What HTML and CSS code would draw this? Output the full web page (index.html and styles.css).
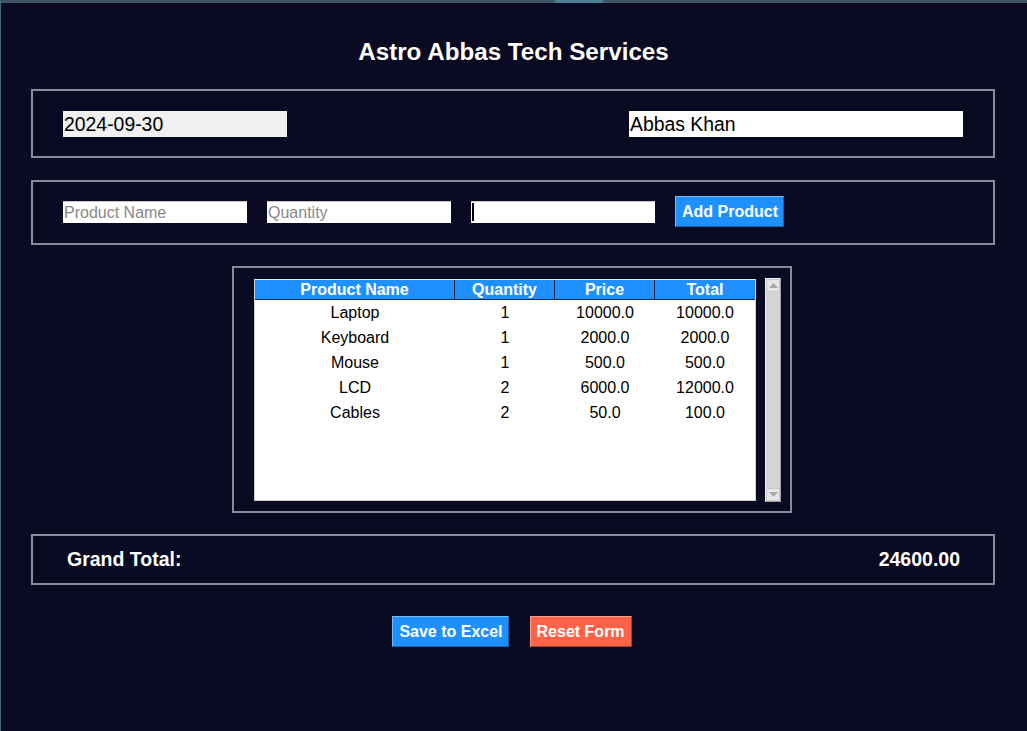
FILE: index.html
```html
<!DOCTYPE html>
<html lang="en">
<head>
<meta charset="utf-8">
<title>Astro Abbas Tech Services</title>
<link rel="stylesheet" href="styles.css">
</head>
<body>
<div class="window">
  <div class="topbar"><span class="topbar-seg"></span></div>
  <h1 class="title">Astro Abbas Tech Services</h1>

  <section class="frame frame-info">
    <div class="entry entry-date">2024-09-30</div>
    <div class="entry entry-name">Abbas Khan</div>
  </section>

  <section class="frame frame-add">
    <div class="entry entry-small placeholder">Product Name</div>
    <div class="entry entry-small placeholder">Quantity</div>
    <div class="entry entry-small"><span class="caret"></span></div>
    <button class="btn btn-blue">Add Product</button>
  </section>

  <section class="frame frame-table">
    <div class="tree">
      <div class="tree-head">
        <div class="th">Product Name</div>
        <div class="th">Quantity</div>
        <div class="th">Price</div>
        <div class="th">Total</div>
      </div>
      <div class="tree-body">
        <div class="tr"><div>Laptop</div><div>1</div><div>10000.0</div><div>10000.0</div></div>
        <div class="tr"><div>Keyboard</div><div>1</div><div>2000.0</div><div>2000.0</div></div>
        <div class="tr"><div>Mouse</div><div>1</div><div>500.0</div><div>500.0</div></div>
        <div class="tr"><div>LCD</div><div>2</div><div>6000.0</div><div>12000.0</div></div>
        <div class="tr"><div>Cables</div><div>2</div><div>50.0</div><div>100.0</div></div>
      </div>
    </div>
    <div class="scrollbar">
      <div class="sb-btn"><svg width="9" height="5" viewBox="0 0 9 5"><path d="M0 5 L4.5 0 L9 5 Z" fill="#a8a8a8"/></svg></div>
      <div class="sb-track"></div>
      <div class="sb-btn"><svg width="9" height="5" viewBox="0 0 9 5"><path d="M0 0 L4.5 5 L9 0 Z" fill="#a8a8a8"/></svg></div>
    </div>
  </section>

  <section class="frame frame-total">
    <span class="total-label">Grand Total:</span>
    <span class="total-value">24600.00</span>
  </section>

  <div class="actions">
    <button class="btn btn-blue btn-save">Save to Excel</button>
    <button class="btn btn-red">Reset Form</button>
  </div>
</div>
</body>
</html>
```

FILE: styles.css
```css
* { box-sizing: border-box; }

html, body {
  margin: 0;
  padding: 0;
  background: #0a0a23;
}

body {
  font-family: "Liberation Sans", Arial, sans-serif;
  color: #ffffff;
}

.window {
  width: 1027px;
  height: 731px;
  display: flex;
  flex-direction: column;
  background: #0a0a23;
  border-left: 1px solid #3d6a80;
  overflow: hidden;
}

.topbar {
  height: 3px;
  background: #3f5862;
  position: relative;
  margin-left: -1px;
}

.topbar-seg {
  position: absolute;
  left: 555px;
  top: 0;
  width: 48px;
  height: 3px;
  background: #4f7f95;
}

.title {
  margin: 35px 0 23px 0;
  height: 28px;
  line-height: 28px;
  font-size: 24.2px;
  font-weight: bold;
  text-align: center;
  padding-right: 1px;
}

.frame {
  margin-left: 30px;
  width: 964px;
  border: 2px solid #8a8a9c;
  display: flex;
  align-items: center;
}

.frame-info {
  padding: 20px 30px 19px 30px;
  justify-content: space-between;
}

.entry {
  background: #ffffff;
  color: #000000;
  font-size: 19.4px;
  line-height: 26px;
  height: 26px;
  padding-left: 1px;
  white-space: nowrap;
}

.entry-date {
  width: 224px;
  background: #f0f0f0;
}

.entry-name {
  width: 334px;
}

.frame-add {
  margin-top: 22px;
  padding: 14px 30px 16px 30px;
  gap: 20px;
}

.entry-small {
  width: 184px;
  height: 22px;
  line-height: 22px;
  font-size: 16px;
  position: relative;
  border-top: 1px solid #c8c8c8;
}

.placeholder {
  color: #888888;
}

.caret {
  position: absolute;
  left: 1px;
  top: 1px;
  width: 2px;
  height: 18px;
  background: #000000;
}

.btn {
  font-family: "Liberation Sans", Arial, sans-serif;
  font-size: 16px;
  font-weight: bold;
  color: #ffffff;
  height: 31px;
  padding: 0 6px;
  border: 1px solid;
  line-height: 29px;
  cursor: pointer;
}

.btn-blue {
  background: #1e90ff;
  border-color: #7ab8f0 #1a5fa8 #1a5fa8 #7ab8f0;
}

.btn-red {
  background: #ff6347;
  border-color: #f5a090 #a84030 #a84030 #f5a090;
}

.btn-save {
  padding: 0 5px 0 6px;
}

.frame-add .btn {
  padding: 0 5px 0 6px;
}

.frame-table {
  margin-top: 21px;
  margin-left: 231px;
  width: 560px;
  padding: 10px 9px 9px 20px;
  align-items: flex-start;
  gap: 9px;
}

.tree {
  width: 502px;
  height: 222px;
  margin-top: 1px;
  background: #ffffff;
  border: 1px solid #d0d0d0;
  border-top-color: #e8e8e8;
}

.tree-head {
  display: grid;
  grid-template-columns: 200px 100px 100px 100px;
  height: 20px;
  background: #1e90ff;
  border-bottom: 1px solid #1a2240;
}

.th {
  font-size: 16px;
  font-weight: bold;
  color: #ffffff;
  text-align: center;
  line-height: 19px;
  border-right: 1px solid #1a2240;
}

.th:last-child {
  border-right: none;
}

.tree-body {
  color: #000000;
  font-size: 16px;
}

.tr {
  display: grid;
  grid-template-columns: 200px 100px 100px 100px;
  height: 25px;
  line-height: 25px;
  text-align: center;
}

.scrollbar {
  width: 16px;
  height: 224px;
  background: #d6d6d6;
  border: 1px solid #f0f0f0;
  border-right-color: #a0a0a0;
  border-bottom-color: #a0a0a0;
  display: flex;
  flex-direction: column;
}

.sb-btn {
  height: 13px;
  display: flex;
  align-items: center;
  justify-content: center;
  background: #e6e6e6;
  border: 1px solid #c8c8c8;
}

.sb-track {
  flex: 1;
  background: #d4d4d4;
}

.frame-total {
  margin-top: 21px;
  padding: 12px 33px 13px 34px;
  justify-content: space-between;
}

.total-label,
.total-value {
  font-size: 19.5px;
  font-weight: bold;
  line-height: 22px;
}

.actions {
  margin-top: 31px;
  display: flex;
  justify-content: center;
  gap: 21px;
  padding-right: 4px;
}
```
